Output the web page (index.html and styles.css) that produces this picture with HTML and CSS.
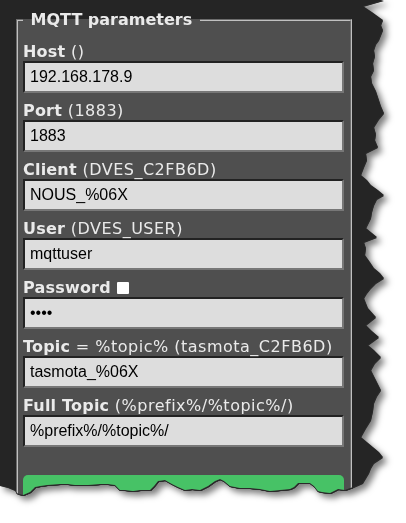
FILE: index.html
```html
<!DOCTYPE html>
<html lang="en">
<head>
    <meta charset="UTF-8">
    <meta name="viewport" content="width=device-width, initial-scale=1.0">
    <title>MQTT parameters</title>
    <link rel="stylesheet" href="styles.css">
</head>
<body>
    <div class="torn">
        <div class="shot">
            <fieldset>
                <legend><b>&nbsp;MQTT parameters&nbsp;</b></legend>
                <form method="get" action="mq">
                    <p><b>Host</b> ()<br><input id="mh" value="192.168.178.9"></p>
                    <p><b>Port</b> (1883)<br><input id="ml" value="1883"></p>
                    <p><b>Client</b> (DVES_C2FB6D)<br><input id="mc" value="NOUS_%06X"></p>
                    <p><b>User</b> (DVES_USER)<br><input id="mu" value="mqttuser"></p>
                    <p><b>Password</b><input type="checkbox" class="show-pw"><br><input id="mp" type="password" value="abcd"></p>
                    <p><b>Topic</b> = %topic% (tasmota_C2FB6D)<br><input id="mt" value="tasmota_%06X"></p>
                    <p><b>Full Topic</b> (%prefix%/%topic%/)<br><input id="mf" value="%prefix%/%topic%/"></p>
                    <button name="save" type="submit" class="btn-save">Save</button>
                </form>
            </fieldset>
        </div>
    </div>
</body>
</html>
```

FILE: styles.css
```css
body {
    margin: 0;
    background-color: #ffffff;
}

/* screenshot cut-out with torn right and bottom edge */
.torn {
    width: 406px;
    height: 523px;
    filter: drop-shadow(0 1px 0 #2a2a2a) drop-shadow(1px 0 0 #2a2a2a) drop-shadow(4px 4px 3px rgba(0, 0, 0, 0.5));
}

.shot {
    width: 390px;
    height: 500px;
    box-sizing: border-box;
    padding: 10px 0 0 16px;
    background-color: #252525;
    color: #eaeaea;
    font-family: "DejaVu Sans", Verdana, sans-serif;
    font-size: 16px;
    clip-path: polygon(0 0, 383px 0, 362px 6px, 371px 12px, 382px 20px, 380px 25px, 382px 30px, 378px 40px, 375px 44px, 373px 50px, 374px 56px, 372px 63px, 373px 70px, 370px 76px, 371px 83px, 375px 91px, 378px 100px, 380px 106px, 383px 113px, 378px 119px, 373px 127px, 375px 134px, 374px 140px, 377px 147px, 365px 153px, 366px 160px, 363px 167px, 360px 175px, 366px 180px, 370px 185px, 377px 190px, 383px 195px, 376px 199px, 373px 205px, 371px 212px, 370px 218px, 365px 228px, 376px 237px, 363px 242px, 365px 248px, 364px 255px, 369px 262px, 373px 268px, 379px 273px, 383px 278px, 375px 283px, 370px 288px, 366px 293px, 363px 298px, 367px 308px, 375px 317px, 365px 325px, 371px 331px, 378px 337px, 367px 345px, 373px 350px, 380px 357px, 374px 363px, 370px 370px, 375px 380px, 380px 390px, 376px 396px, 373px 403px, 372px 411px, 370px 420px, 365px 428px, 360px 437px, 366px 442px, 372px 447px, 378px 452px, 382px 457px, 373px 463px, 370px 468px, 368px 473px, 362px 483px, 353px 487px, 345px 490px, 338px 489px, 330px 493px, 322px 492px, 318px 491px, 314px 486px, 310px 483px, 298px 483px, 294px 487px, 290px 489px, 280px 490px, 270px 491px, 260px 489px, 250px 488px, 240px 488px, 230px 486px, 224px 481px, 220px 479px, 215px 481px, 208px 486px, 200px 490px, 192px 489px, 185px 490px, 178px 487px, 172px 484px, 165px 480px, 158px 481px, 154px 486px, 150px 490px, 140px 490px, 133px 491px, 125px 490px, 120px 490px, 117px 487px, 115px 485px, 108px 484px, 100px 484px, 88px 485px, 75px 485px, 68px 484px, 60px 484px, 47px 485px, 40px 486px, 35px 487px, 32px 490px, 30px 492px, 23px 495px, 19px 494px, 17px 493px, 15px 490px, 8px 487px, 0 485px);
}

fieldset {
    width: 336px;
    box-sizing: border-box;
    margin: 0;
    padding: 5px 6px 5px 5px;
    border: 2px groove #c0c0c0;
    background-color: #4f4f4f;
}

legend {
    padding: 0 2px;
    line-height: 19px;
}

fieldset p {
    margin: 8px 0;
    line-height: 19px;
    letter-spacing: 0.5px;
}

fieldset p b {
    letter-spacing: 0.2px;
}

fieldset input {
    display: block;
    width: 100%;
    height: 32px;
    box-sizing: border-box;
    margin: 0;
    padding: 0 5px;
    border: 2px solid;
    border-color: #222222 #777777 #777777 #222222;
    background-color: #dddddd;
    color: #000000;
    font-family: "Liberation Sans", Arial, sans-serif;
    font-size: 16px;
    letter-spacing: 0;
}

fieldset input.show-pw {
    display: inline-block;
    vertical-align: -1px;
    width: 12px;
    height: 12px;
    margin: 0 0 0 6px;
    padding: 0;
    border: 0;
    border-radius: 1px;
    background-color: #ffffff;
    appearance: none;
    -webkit-appearance: none;
}

.btn-save {
    display: block;
    width: 100%;
    height: 38px;
    margin-top: 28px;
    border: 0;
    border-radius: 5px;
    background-color: #47c266;
    color: #ffffff;
    font-size: 19px;
}
```
